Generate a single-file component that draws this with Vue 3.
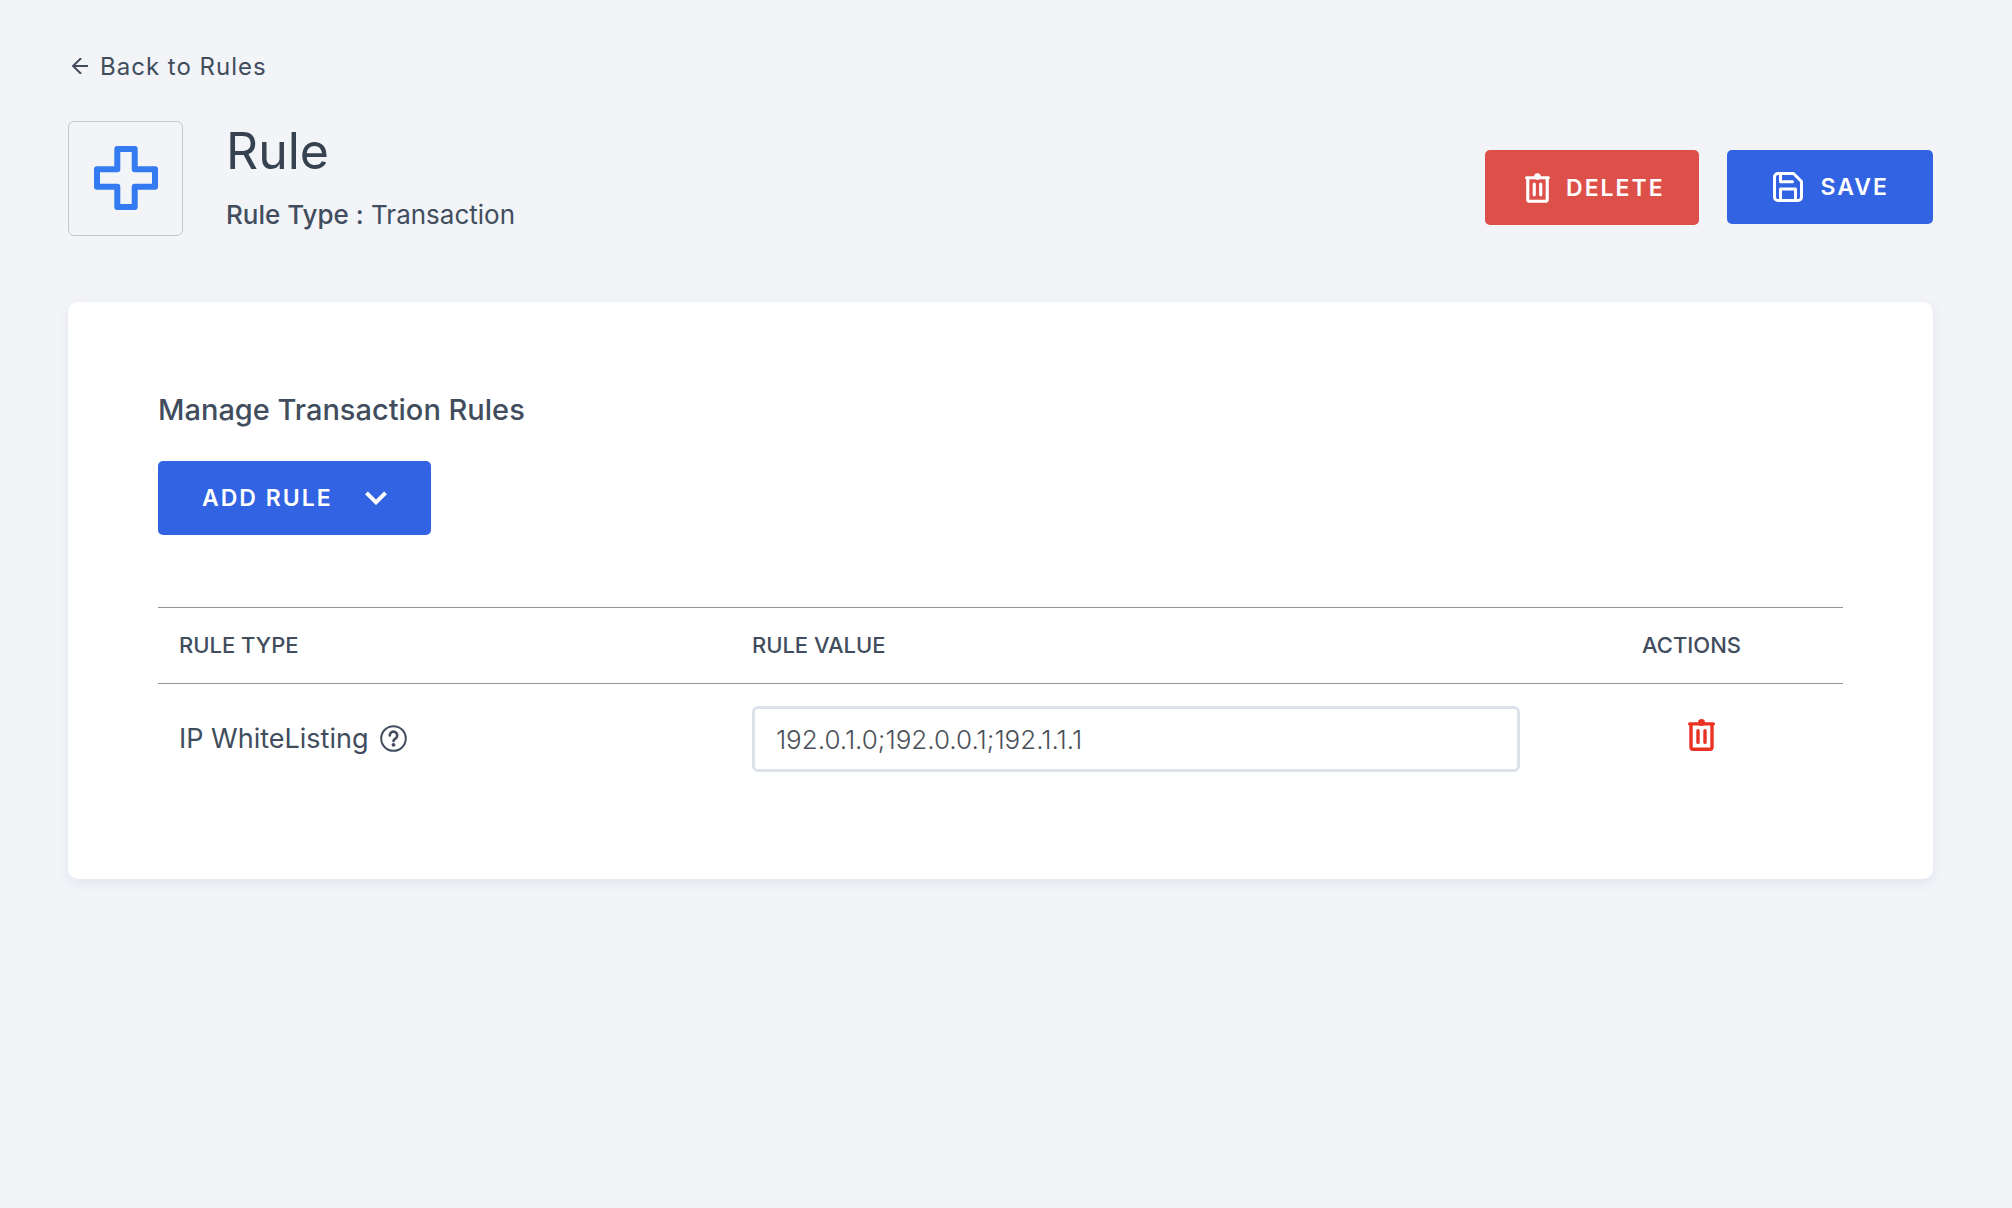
<script setup>
import { ref } from 'vue'

const rules = ref([
  { id: 'ip-whitelisting', name: 'IP WhiteListing', value: '192.0.1.0;192.0.0.1;192.1.1.1' },
])

function removeRule(id) {
  rules.value = rules.value.filter((rule) => rule.id !== id)
}
</script>

<template>
  <main class="page">
    <a class="back" href="#rules">
      <svg class="back-icon" viewBox="0 0 16 16" aria-hidden="true">
        <path d="M8.500 .8 1 8l7.500 7.200M1 8h14.500" />
      </svg>
      <span>Back to Rules</span>
    </a>

    <header class="header">
      <div class="badge">
        <svg class="cross" viewBox="0 0 64 64" aria-hidden="true">
          <path d="M23.300 3h17.400v20.300H61v17.400H40.700V61H23.300V40.700H3V23.300h20.300z" />
        </svg>
      </div>
      <div class="titles">
        <h1>Rule</h1>
        <p><strong>Rule Type :</strong> Transaction</p>
      </div>
      <div class="buttons">
        <button class="btn danger" type="button">
          <svg class="trash" viewBox="0 0 27 32" aria-hidden="true">
            <circle class="dot" cx="13.500" cy="3.500" r="3.500" />
            <path stroke-width="3.400" d="M1.700 4.900h23.600M3 5v23.300q0 2 2 2h17q2 0 2-2V5M10 11.800v11.600M17 11.800v11.600" />
          </svg>
          <span>DELETE</span>
        </button>
        <button class="btn primary save" type="button">
          <svg class="disk" viewBox="0 0 30 30" aria-hidden="true">
            <path d="M5 1.500h15.500l8 8V25a3.500 3.500 0 0 1-3.500 3.500H5A3.500 3.500 0 0 1 1.500 25V5A3.500 3.500 0 0 1 5 1.500zM7.500 1.500v8.200h12M7.500 28.500V17h15v11.500" />
          </svg>
          <span>SAVE</span>
        </button>
      </div>
    </header>

    <section class="card">
      <h2>Manage Transaction Rules</h2>
      <button class="btn primary add" type="button" aria-haspopup="menu">
        <span>ADD RULE</span>
        <svg class="chevron" viewBox="0 0 22 14" aria-hidden="true">
          <path d="m1.500 1.800 9.500 9.500 9.500-9.500" />
        </svg>
      </button>

      <table>
        <thead>
          <tr>
            <th class="col-type" scope="col">RULE TYPE</th>
            <th scope="col">RULE VALUE</th>
            <th class="col-actions" scope="col">ACTIONS</th>
          </tr>
        </thead>
        <tbody>
          <tr v-for="rule in rules" :key="rule.id">
            <td class="name-cell">
              <div class="rule-name">
                <label :for="rule.id">{{ rule.name }}</label>
                <svg class="help" viewBox="0 0 27 27" aria-hidden="true">
                  <circle cx="13.500" cy="13.500" r="12.300" />
                  <path stroke-width="2.600" d="M9.800 10.400a3.700 3.700 0 1 1 5.600 3.200c-1.400.8-1.900 1.300-1.900 2.300" />
                  <circle class="dot" cx="13.500" cy="19.800" r="1.900" />
                </svg>
              </div>
            </td>
            <td>
              <input :id="rule.id" v-model="rule.value" type="text" />
            </td>
            <td class="action-cell">
              <button class="remove" type="button" :aria-label="`Remove ${rule.name}`" @click="removeRule(rule.id)">
                <svg class="trash" viewBox="0 0 27 32" aria-hidden="true">
                  <circle class="dot" cx="13.500" cy="3.500" r="3.500" />
                  <path stroke-width="3.400" d="M1.700 4.900h23.600M3 5v23.300q0 2 2 2h17q2 0 2-2V5M10 11.800v11.600M17 11.800v11.600" />
                </svg>
              </button>
            </td>
          </tr>
        </tbody>
      </table>
    </section>
  </main>
</template>

<style>
body {
  background: #f2f4f8;
}
</style>

<style scoped>
.page {
  padding: 48px 79px 48px 68px;
  color: #414d5d;
  font-family: Inter, "Liberation Sans", sans-serif;
}

svg {
  display: block;
  flex: none;
  fill: none;
  stroke: currentColor;
  stroke-linecap: round;
  stroke-linejoin: round;
}

.back {
  display: inline-flex;
  align-items: center;
  gap: 12px;
  padding-left: 4px;
  color: inherit;
  font-size: 24px;
  line-height: 37px;
  letter-spacing: 1px;
  text-decoration: none;
}

.back-icon {
  width: 16px;
  height: 16px;
  margin-bottom: 2px;
  stroke-width: 2;
}

.header {
  display: flex;
  margin-top: 36px;
}

.badge {
  display: flex;
  align-items: center;
  justify-content: center;
  box-sizing: border-box;
  width: 115px;
  height: 115px;
  padding-bottom: 1px;
  border: 1px solid #c4c8cd;
  border-radius: 6px;
}

.cross {
  width: 64px;
  height: 64px;
  color: #347af0;
  stroke-width: 6;
}

.titles {
  margin-left: 43px;
}

h1 {
  margin: 0;
  color: #36424f;
  font-size: 50px;
  font-weight: 400;
  line-height: 60px;
}

p {
  margin: 16px 0 0;
  font-size: 26px;
  line-height: 36px;
}

strong {
  font-weight: 500;
}

.buttons {
  display: flex;
  align-items: flex-start;
  gap: 28px;
  margin: 29px 0 0 auto;
}

.btn {
  display: flex;
  align-items: center;
  box-sizing: border-box;
  height: 74px;
  padding: 0 44px;
  border: 0;
  border-radius: 5px;
  color: #fff;
  font: 600 23px/32px Inter, "Liberation Sans", sans-serif;
  letter-spacing: 2px;
  cursor: pointer;
}

.danger {
  gap: 16px;
  height: 75px;
  padding: 0 34px 0 40px;
  background: #dc5049;
}

.primary {
  background: #3163e2;
}

.save {
  gap: 18px;
  padding-left: 46px;
}

.trash {
  width: 27px;
  height: 32px;
}

.danger .trash {
  width: 25px;
  height: 30px;
}

.dot {
  fill: currentColor;
  stroke: none;
}

.disk {
  width: 30px;
  height: 30px;
  stroke-width: 3;
}

.card {
  margin-top: 66px;
  padding: 88px 90px 85px;
  border-radius: 10px;
  background: #fff;
  box-shadow: 0 4px 12px rgba(40, 70, 130, 0.08);
}

h2 {
  margin: 0;
  font-size: 29px;
  font-weight: 500;
  line-height: 40px;
}

.add {
  gap: 32px;
  margin-top: 31px;
}

.chevron {
  width: 22px;
  height: 14px;
  stroke-width: 4;
  stroke-linecap: butt;
  stroke-linejoin: miter;
}

table {
  width: 100%;
  margin-top: 72px;
  border-collapse: collapse;
  table-layout: fixed;
}

thead tr {
  border: solid #929497;
  border-width: 1px 0;
}

th {
  box-sizing: border-box;
  height: 76px;
  padding: 0 21px 2px;
  font-size: 22px;
  font-weight: 500;
  text-align: left;
}

.col-type {
  width: 34%;
}

.col-actions {
  width: 222px;
}

td {
  padding: 22px 21px;
  font-size: 27px;
}

.name-cell {
  padding-bottom: 24px;
}

.action-cell {
  padding-bottom: 30px;
}

.rule-name {
  display: flex;
  align-items: center;
  gap: 12px;
}

.help {
  width: 27px;
  height: 27px;
  stroke-width: 2;
}

input {
  display: block;
  box-sizing: border-box;
  width: calc(100% - 80px);
  height: 66px;
  padding: 0 21px;
  border: 3px solid #dee2ec;
  border-radius: 6px;
  background: #fff;
  color: #495057;
  font: 300 26px Inter, "Liberation Sans", sans-serif;
}

.remove {
  display: block;
  margin-left: 46px;
  padding: 0;
  border: 0;
  background: none;
  color: #ea3223;
  cursor: pointer;
}
</style>
